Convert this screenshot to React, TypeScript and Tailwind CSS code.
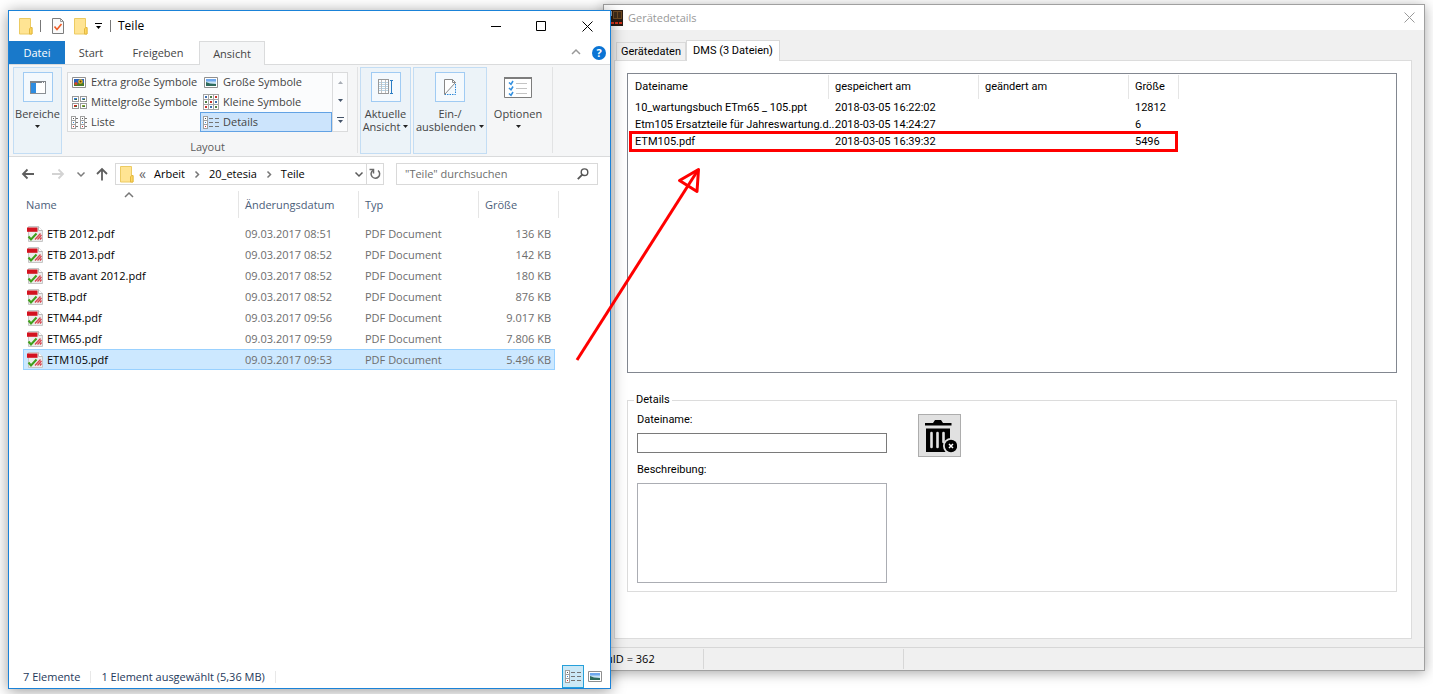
import React, { useState } from "react";
import clsx from "clsx";

const files = [
  { name: "ETB 2012.pdf", date: "09.03.2017 08:51", size: "136 KB" },
  { name: "ETB 2013.pdf", date: "09.03.2017 08:52", size: "142 KB" },
  { name: "ETB avant 2012.pdf", date: "09.03.2017 08:52", size: "180 KB" },
  { name: "ETB.pdf", date: "09.03.2017 08:52", size: "876 KB" },
  { name: "ETM44.pdf", date: "09.03.2017 09:56", size: "9.017 KB" },
  { name: "ETM65.pdf", date: "09.03.2017 09:59", size: "7.806 KB" },
  { name: "ETM105.pdf", date: "09.03.2017 09:53", size: "5.496 KB" },
];

const documents = [
  { name: "10_wartungsbuch ETm65 _ 105.ppt", saved: "2018-03-05 16:22:02", size: "12812" },
  { name: "Etm105 Ersatzteile für Jahreswartung.d...", saved: "2018-03-05 14:24:27", size: "6" },
  { name: "ETM105.pdf", saved: "2018-03-05 16:39:32", size: "5496" },
];

/* ---------- icons ---------- */

const FolderIcon = () => (
  <svg width="14" height="17" viewBox="0 0 14 17" className="shrink-0">
    <path d="M.5.5h11v9h1.500v6.500H.5z" fill="#ffe493" stroke="#eccb62" />
    <path d="M11.500 9.500h1.500v6.500h-2.500v-5z" fill="#ffd75e" stroke="#e3b840" />
  </svg>
);

const CheckPageIcon = () => (
  <svg width="12" height="16" viewBox="0 0 12 16">
    <path d="M.5.5h8l3 3v12H.5z" fill="#fafafa" stroke="#7d7d7d" />
    <path d="M8.500.5v3h3" fill="none" stroke="#9a9a9a" />
    <path d="M2.500 8.500l2.500 3 4.500-5.500" fill="none" stroke="#ee5a24" strokeWidth="1.600" />
  </svg>
);

const Caret = ({ className = "text-[#222]" }: { className?: string }) => (
  <svg width="5" height="3" viewBox="0 0 5 3" className={clsx("inline-block shrink-0", className)}>
    <path d="M0 0h5L2.500 3z" fill="currentColor" />
  </svg>
);

const Chevron = ({ dir, className }: { dir: "up" | "down" | "right"; className?: string }) => {
  const paths = {
    up: "M1 6l4-4 4 4",
    down: "M1.500 2.500L5 6l3.500-3.500",
    right: "M3.500 1.500L6.500 4.500l-3 3",
  };
  return (
    <svg width="10" height="9" viewBox="0 0 10 9" className={clsx("shrink-0", className)}>
      <path d={paths[dir]} fill="none" stroke="currentColor" strokeWidth="1.500" />
    </svg>
  );
};

const Arrow = ({ d, className }: { d: string; className: string }) => (
  <svg width="14" height="14" viewBox="0 0 14 14" className={className}>
    <path d={d} fill="none" stroke="currentColor" strokeWidth="1.800" />
  </svg>
);

const PdfIcon = () => (
  <svg width="16" height="16" viewBox="0 0 16 16" className="shrink-0">
    <path d="M1.500.5h10l4 4v11h-14z" fill="#ececec" stroke="#c6c6c6" />
    <path d="M11.500.5v4h4" fill="#fff" stroke="#b9b9b9" />
    <path d="M0 1.500h10.500v4.300H0z" fill="#d4121f" />
    <path d="M8 13.500l5.500-6M10.500 13.500l4-4.500M13 13.500l1.500-2" stroke="#d8434c" strokeWidth="1.300" />
    <path d="M1.500 10.500l2.500 3 5.500-6" fill="none" stroke="#3fa01c" strokeWidth="2" />
  </svg>
);

const PictureIcon = ({ flowers = false }: { flowers?: boolean }) => (
  <svg width="14" height="11" viewBox="0 0 14 11">
    <path d="M.5.5h13v10H.5z" fill="#fff" stroke="#8f8f8f" />
    <path d="M2 2h10v7H2z" fill={flowers ? "#2b62b8" : "#6fa8ee"} />
    {flowers ? (
      <>
        <path d="M2 6h10v3H2z" fill="#4b7a2a" />
        <circle cx="4" cy="6.500" r="1.500" fill="#d6402b" />
        <circle cx="8.500" cy="4.500" r="2.300" fill="#e8b21d" />
        <circle cx="8.500" cy="4.500" r="1" fill="#5a3a10" />
      </>
    ) : (
      <>
        <path d="M2 4.500h10V7H2z" fill="#c9e2f4" />
        <path d="M2 5l4 1.500 6 .5v2H2z" fill="#2f6b5c" />
      </>
    )}
  </svg>
);

const MediumIcon = () => (
  <svg width="15" height="13" viewBox="0 0 15 13" shapeRendering="crispEdges">
    {[
      [0, 0, "#3b7fd0"],
      [8, 0, "#5f92c8"],
      [0, 7, "#d0281c"],
      [8, 7, "#87a63a"],
    ].map(([x, y, fill]) => (
      <g key={`${x}-${y}`} transform={`translate(${x} ${y})`}>
        <path d="M.5.5h6v5h-6z" fill="#fff" stroke="#999" />
        <path d="M2 2h3v2H2z" fill={String(fill)} />
        <path d="M3 3h2v1H3z" fill="#3d6f3a" />
      </g>
    ))}
  </svg>
);

const SmallIcon = () => (
  <svg width="16" height="16" viewBox="0 0 16 16" shapeRendering="crispEdges">
    {[0, 5, 10].map((y, row) =>
      [0, 5, 10].map((x, col) => (
        <g key={`${x}-${y}`}>
          <path d={`M${x}.5 ${y}.5h5v5h-5z`} fill="#fff" stroke="#a5a5a5" />
          <path
            d={`M${x + 2} ${y + 2}h2v2h-2z`}
            fill={["#3b6fb0", "#4d7f45", "#c4302a"][(row + col) % 3]}
          />
        </g>
      ))
    )}
  </svg>
);

const ListIcon = () => (
  <svg width="16" height="13" viewBox="0 0 16 13" shapeRendering="crispEdges">
    {[0, 9].map((x) => (
      <g key={x} transform={`translate(${x} 0)`}>
        <path d="M.5.5h4v12h-4zM.5 4.500h4M.5 8.500h4" fill="#fff" stroke="#a0a0a0" />
        <path d="M2 2h1v1H2z" fill="#555" />
        <path d="M2 6h1v1H2z" fill="#3b8ad8" />
        <path d="M2 10h1v1H2z" fill="#d03030" />
        <path d="M5 2.500h2M5 6.500h2M5 10.500h2" stroke="#777" />
      </g>
    ))}
  </svg>
);

const DetailsIcon = () => (
  <svg width="16" height="13" viewBox="0 0 16 13" shapeRendering="crispEdges">
    <path d="M.5.5h4v12h-4zM.5 4.500h4M.5 8.500h4" fill="#fff" stroke="#a0a0a0" />
    <path d="M2 2h1v1H2z" fill="#555" />
    <path d="M2 6h1v1H2z" fill="#3b8ad8" />
    <path d="M2 10h1v1H2z" fill="#d03030" />
    <path d="M6 2.500h4M12 2.500h4M6 6.500h4M12 6.500h4M6 10.500h4M12 10.500h4" stroke="#747474" />
  </svg>
);

const PanesIcon = () => (
  <svg width="16" height="13" viewBox="0 0 16 13" shapeRendering="crispEdges">
    <path d="M.5.5h15v12H.5z" fill="#fff" stroke="#8a8f94" />
    <path d="M0 0h16v2H0z" fill="#80858a" />
    <path d="M1 2h5v10H1z" fill="#2d8ce0" />
    <path d="M12 1h1v1h-1zM14 1h1v1h-1z" fill="#fff" />
  </svg>
);

const CurrentViewIcon = () => (
  <svg width="16" height="16" viewBox="0 0 16 16" shapeRendering="crispEdges">
    <path d="M.5.5h10v14H.5z" fill="#fff" stroke="#999" />
    <path d="M1 3.500h9M1 5.500h9M1 7.500h9M1 9.500h9M1 11.500h9" stroke="#b5d3e6" />
    <path d="M3.500 1v13M7.500 1v13" stroke="#c0c0c0" />
    <path d="M13.500 1v14M12 1.500h3M12 14.500h3" stroke="#2b7dc4" />
  </svg>
);

const HideIcon = () => (
  <svg width="13" height="17" viewBox="0 0 13 17">
    <path d="M.5 15.500V.5h8l3 3z" fill="#fff" stroke="#888" />
    <path d="M8.500.5v3h3" fill="none" stroke="#888" />
    <path d="M11.500 5v10.500H1" fill="none" stroke="#2a86d8" strokeDasharray="1.500 1" />
  </svg>
);

const OptionsIcon = () => (
  <svg width="28" height="21" viewBox="0 0 28 21">
    <path d="M.5.5h27v20H.5z" fill="#fff" stroke="#7d7d7d" />
    <path d="M0 0h28v2H0z" fill="#7d7d7d" />
    <path d="M5 5.500l2 1.800L9 4M5 11l2 1.800L9 9.500M5 16.500l2 1.800L9 15" fill="none" stroke="#3390e0" strokeWidth="1.600" />
    <path d="M12 6.500h11M12 11.500h11M12 16.500h11" stroke="#c4c4c4" />
  </svg>
);

const TrashIcon = () => (
  <svg width="34" height="34" viewBox="0 0 34 34">
    <path d="M2 4h8l2-3h6l2 3h8.500v2.500H2z" fill="#000" />
    <path d="M3 9.500h24v23.500H3z" fill="#000" />
    <path d="M8.500 14v14M14.500 14v14M20.500 14v9" stroke="#e1e1e1" strokeWidth="2.600" strokeLinecap="round" />
    <circle cx="28" cy="27" r="8" fill="#e1e1e1" />
    <circle cx="28" cy="27" r="6.200" fill="#000" />
    <path d="M26 25l4 4M30 25l-4 4" stroke="#fff" strokeWidth="1.500" />
  </svg>
);

const AppIcon = () => (
  <svg width="16" height="16" viewBox="0 0 16 16" shapeRendering="crispEdges">
    <path d="M0 0h16v16H0z" fill="#2a1c14" />
    <path d="M6 1.500h8.500v7H6z" fill="#3d2a18" stroke="#6e4a22" />
    <path d="M10.500 2v6" stroke="#6e4a22" />
    <path d="M0 12h7v2H0zM8 12h3v2H8zM12 12h3v2h-3z" fill="#d8341c" />
    <path d="M1 1h4v5H1z" fill="#8fa0b4" />
  </svg>
);

/* ---------- explorer window ---------- */

const layouts = [
  { label: "Extra große Symbole", icon: <PictureIcon flowers /> },
  { label: "Große Symbole", icon: <PictureIcon /> },
  { label: "Mittelgroße Symbole", icon: <MediumIcon /> },
  { label: "Kleine Symbole", icon: <SmallIcon /> },
  { label: "Liste", icon: <ListIcon /> },
  { label: "Details", icon: <DetailsIcon /> },
];

const ExplorerTitle = () => (
  <header className="flex h-[30px] items-center pl-[10px]">
    <FolderIcon />
    <span className="ml-[7px] h-3 w-px bg-[#777]" />
    <button aria-label="Eigenschaften" className="ml-[11px]">
      <CheckPageIcon />
    </button>
    <button aria-label="Neuer Ordner" className="ml-[10px]">
      <FolderIcon />
    </button>
    <button aria-label="Schnellzugriff anpassen" className="ml-[7px] flex flex-col items-center gap-[2px]">
      <span className="h-px w-[7px] bg-black" />
      <Caret className="text-black" />
    </button>
    <span className="ml-2 h-3 w-px bg-[#777]" />
    <h1 className="ml-[7px] text-xs text-black">Teile</h1>
    <div className="ml-auto flex">
      <button aria-label="Minimieren" className="flex h-[29px] w-[46px] items-center justify-center">
        <svg width="11" height="11" viewBox="0 0 11 11">
          <path d="M0 5.500h10" stroke="#000" />
        </svg>
      </button>
      <button aria-label="Maximieren" className="flex h-[29px] w-[45px] items-center justify-center">
        <svg width="11" height="11" viewBox="0 0 11 11">
          <path d="M.5.5h9v9h-9z" fill="none" stroke="#000" />
        </svg>
      </button>
      <button aria-label="Schließen" className="flex h-[29px] w-[46px] items-center justify-center">
        <svg width="11" height="11" viewBox="0 0 11 11">
          <path d="M.5.5l10 10M10.500.5l-10 10" stroke="#000" />
        </svg>
      </button>
    </div>
  </header>
);

const ExplorerTabs = () => (
  <nav className="flex h-6 border-b border-[#dadbdc] text-[#444]">
    <button className="w-14 bg-[#1979ca] text-white">Datei</button>
    <button className="w-[52px]">Start</button>
    <button className="w-[82px]">Freigeben</button>
    <button className="-mb-px w-[66px] border border-b-0 border-[#dadbdc] bg-[#f5f6f7]">Ansicht</button>
    <div className="ml-auto flex items-center gap-[11px] pr-1">
      <button aria-label="Menüband minimieren">
        <Chevron dir="up" className="text-[#999]" />
      </button>
      <button
        aria-label="Hilfe"
        className="flex h-[14px] w-[14px] items-center justify-center rounded-full bg-[#0b74d4] font-bold leading-none text-white"
      >
        ?
      </button>
    </div>
  </nav>
);

interface RibbonButtonProps {
  icon: React.ReactNode;
  lines: string[];
  width: string;
  active?: boolean;
}

const RibbonButton = ({ icon, lines, width, active = true }: RibbonButtonProps) => (
  <button
    className={clsx(
      "flex h-[87px] shrink-0 flex-col items-center border pt-1 leading-[13px]",
      width,
      active ? "border-[#c3ddf4] bg-[#ecf3f8]" : "border-transparent"
    )}
  >
    <span
      className={clsx(
        "mb-[5px] flex h-[30px] w-[30px] items-center justify-center border",
        active ? "border-[#a0cbf3] bg-[#f4f9fd]" : "border-transparent"
      )}
    >
      {icon}
    </span>
    <span className="whitespace-nowrap">{lines[0]}</span>
    <span className="flex h-[13px] items-center gap-[3px] whitespace-nowrap">
      {lines[1]}
      <Caret />
    </span>
  </button>
);

const Ribbon = () => {
  const [layout, setLayout] = useState("Details");

  return (
    <section className="flex h-[92px] border-b border-[#dadbdc] bg-[#f5f6f7] pl-1 pt-[2px] text-[#444]">
      <RibbonButton icon={<PanesIcon />} lines={["Bereiche"]} width="w-[49px]" />
      <div className="ml-[5px] mt-[5px] w-[281px] shrink-0">
        <div className="flex h-[60px] border border-[#dadbdc] bg-[#fbfcfd]">
          <div className="-my-px grid flex-1 grid-cols-2 grid-rows-3">
            {layouts.map((item) => (
              <button
                key={item.label}
                onClick={() => setLayout(item.label)}
                className={clsx(
                  "flex items-center gap-1 whitespace-nowrap border pl-[2px]",
                  layout === item.label ? "border-[#62a2e4] bg-[#cce4fc]" : "border-transparent"
                )}
              >
                <span className="flex w-4 justify-center">{item.icon}</span>
                {item.label}
              </button>
            ))}
          </div>
          <div className="flex w-[15px] flex-col items-center justify-around border-l border-[#dadbdc]">
            <Caret className="rotate-180 text-[#a8adb5]" />
            <Caret className="text-[#44546a]" />
            <span className="flex flex-col items-center gap-[2px]">
              <span className="h-px w-[7px] bg-[#44546a]" />
              <Caret className="text-[#44546a]" />
            </span>
          </div>
        </div>
        <p className="pt-[7px] text-center leading-4 text-[#5c5c5c]">Layout</p>
      </div>
      <span className="ml-[9px] h-[86px] w-px shrink-0 bg-[#e2e3e4]" />
      <div className="ml-[2px] flex gap-[2px]">
        <RibbonButton icon={<CurrentViewIcon />} lines={["Aktuelle", "Ansicht"]} width="w-[51px]" />
        <RibbonButton icon={<HideIcon />} lines={["Ein-/", "ausblenden"]} width="w-[74px]" />
        <RibbonButton icon={<OptionsIcon />} lines={["Optionen"]} width="w-[58px]" active={false} />
      </div>
      <span className="ml-[5px] h-[86px] w-px shrink-0 bg-[#e2e3e4]" />
    </section>
  );
};

const AddressBar = () => (
  <div className="flex h-[34px] items-center pl-3 pr-3">
    <button aria-label="Zurück">
      <Arrow d="M13 7H2M6.500 2.500L2 7l4.500 4.500" className="text-[#5e5e5e]" />
    </button>
    <button aria-label="Vorwärts" className="ml-4">
      <Arrow d="M1 7h11M7.500 2.500L12 7l-4.500 4.500" className="text-[#d3d3d3]" />
    </button>
    <button aria-label="Zuletzt besucht" className="ml-[11px]">
      <Chevron dir="down" className="text-[#7c7c7c]" />
    </button>
    <button aria-label="Nach oben" className="ml-[9px]">
      <Arrow d="M7 13.500V2M2 7l5-5 5 5" className="text-[#5e5e5e]" />
    </button>
    <div className="ml-[6px] flex h-[22px] min-w-0 flex-1 items-center border border-[#d9d9d9] pl-1 text-black">
      <FolderIcon />
      <span className="ml-[5px] text-sm leading-none text-[#666]">«</span>
      <a href="#arbeit" className="ml-2">Arbeit</a>
      <Chevron dir="right" className="ml-[7px] text-[#777]" />
      <a href="#etesia" className="ml-[7px]">20_etesia</a>
      <Chevron dir="right" className="ml-[7px] text-[#777]" />
      <a href="#teile" className="ml-[7px]">Teile</a>
      <button aria-label="Vorherige Orte" className="ml-auto mr-[2px]">
        <Chevron dir="down" className="text-[#5a5a5a]" />
      </button>
      <button aria-label="Aktualisieren" className="flex h-full w-[17px] items-center justify-center border-l border-[#d9d9d9]">
        <svg width="12" height="12" viewBox="0 0 12 12">
          <path d="M9 2.500a4.300 4.300 0 1 1 -5 -.2" fill="none" stroke="#6a6a6a" strokeWidth="1.500" />
          <path d="M4.500 5.500V1.500h-4" fill="none" stroke="#6a6a6a" strokeWidth="1.500" />
        </svg>
      </button>
    </div>
    <label className="ml-3 flex h-[22px] w-[202px] items-center border border-[#d9d9d9] pl-2 pr-2">
      <input
        type="search"
        aria-label="Teile durchsuchen"
        placeholder={'"Teile" durchsuchen'}
        className="min-w-0 flex-1 outline-none placeholder:text-[#6d6d6d]"
      />
      <svg width="12" height="12" viewBox="0 0 12 12">
        <circle cx="7.500" cy="4.200" r="3.300" fill="none" stroke="#555" strokeWidth="1.400" />
        <path d="M5 6.800L.8 11.200" stroke="#555" strokeWidth="1.800" />
      </svg>
    </label>
  </div>
);

const FileTable = () => {
  const [selected, setSelected] = useState("ETM105.pdf");

  return (
    <table className="ml-[14px] w-[536px] table-fixed border-separate border-spacing-0 text-left text-[#6d6d6d]">
      <colgroup>
        <col className="w-[216px]" />
        <col className="w-[120px]" />
        <col className="w-[120px]" />
        <col className="w-[76px]" />
        <col className="w-1" />
      </colgroup>
      <thead className="text-[#4c607a]">
        <tr className="h-[27px]">
          <th className="relative border-r border-[#e5e5e5] pl-[3px] font-normal">
            Name
            <Chevron dir="up" className="absolute left-[101px] top-0 text-[#777]" />
          </th>
          <th className="border-r border-[#e5e5e5] pl-[6px] font-normal">Änderungsdatum</th>
          <th className="border-r border-[#e5e5e5] pl-[6px] font-normal">Typ</th>
          <th colSpan={2} className="border-r border-[#e5e5e5] pl-[6px] font-normal">Größe</th>
        </tr>
      </thead>
      <tbody>
        <tr className="h-[5px]">
          <td colSpan={5} />
        </tr>
        {files.map((file) => {
          const cell = clsx(
            "border-y",
            selected === file.name ? "border-[#99d1ff] bg-[#cce8ff]" : "border-transparent"
          );
          return (
            <tr key={file.name} className="h-[21px]" onClick={() => setSelected(file.name)}>
              <td className={clsx(cell, "border-l pl-[3px] text-black")}>
                <span className="flex items-center gap-1">
                  <PdfIcon />
                  {file.name}
                </span>
              </td>
              <td className={clsx(cell, "pl-[6px]")}>{file.date}</td>
              <td className={clsx(cell, "pl-[6px]")}>PDF Document</td>
              <td className={clsx(cell, "border-r pr-[3px] text-right")}>{file.size}</td>
            </tr>
          );
        })}
      </tbody>
    </table>
  );
};

const ExplorerWindow = () => (
  <section className="absolute bottom-[5px] left-2 top-[10px] z-10 flex w-[603px] flex-col border border-[#1a82d8] bg-white font-['Open_Sans',sans-serif] text-[11px] leading-4 shadow-[0_2px_14px_rgba(0,0,0,0.4)]">
    <ExplorerTitle />
    <ExplorerTabs />
    <Ribbon />
    <AddressBar />
    <FileTable />
    <footer className="mt-auto flex h-[23px] items-center pl-[14px] pr-2 text-[#1e395b]">
      <span>7 Elemente</span>
      <span className="ml-[10px] h-3 w-px bg-[#e8e8e8]" />
      <span className="ml-[10px]">1 Element ausgewählt (5,36 MB)</span>
      <span className="ml-[10px] h-3 w-px bg-[#e8e8e8]" />
      <button
        aria-label="Detailansicht"
        className="ml-auto flex h-[23px] w-[22px] items-center justify-center border border-[#26a0da] bg-[#cbe8f6]"
      >
        <DetailsIcon />
      </button>
      <button aria-label="Große Miniaturansichten" className="ml-1">
        <PictureIcon />
      </button>
    </footer>
  </section>
);

/* ---------- device window ---------- */

const DocumentTable = () => (
  <div className="h-[300px] border border-[#828790] pt-px">
    <table className="w-[551px] table-fixed border-separate border-spacing-0 text-left text-black">
      <colgroup>
        <col className="w-[201px]" />
        <col className="w-[150px]" />
        <col className="w-[150px]" />
        <col className="w-[50px]" />
      </colgroup>
      <thead>
        <tr className="h-6">
          <th className="border-r border-[#e5e5e5] pl-[7px] font-normal">Dateiname</th>
          <th className="border-r border-[#e5e5e5] pl-[6px] font-normal">gespeichert am</th>
          <th className="border-r border-[#e5e5e5] pl-[6px] font-normal">geändert am</th>
          <th className="border-r border-[#e5e5e5] pl-[6px] font-normal">Größe</th>
        </tr>
      </thead>
      <tbody className="whitespace-nowrap">
        {documents.map((doc) => (
          <tr key={doc.name} className="h-[17px]">
            <td className="pl-[7px]">{doc.name}</td>
            <td className="pl-[6px]">{doc.saved}</td>
            <td />
            <td className="pl-[6px]">{doc.size}</td>
          </tr>
        ))}
      </tbody>
    </table>
  </div>
);

const DetailsForm = () => (
  <fieldset className="mt-5 flex h-[199px] items-start border border-[#dcdcdc] pl-[9px]">
    <legend className="-ml-[3px] px-[2px] leading-[14px]">Details</legend>
    <div className="flex w-[250px] flex-col">
      <label htmlFor="dateiname" className="mt-[6px] leading-[14px]">
        Dateiname:
      </label>
      <input id="dateiname" className="mt-[6px] h-5 border border-[#7a7a7a] bg-white px-1 outline-none" />
      <label htmlFor="beschreibung" className="mt-[10px] leading-[14px]">
        Beschreibung:
      </label>
      <textarea
        id="beschreibung"
        className="mt-[6px] h-[100px] resize-none border border-[#abadb3] bg-white px-1 outline-none"
      />
    </div>
    <button
      aria-label="Löschen"
      className="ml-[31px] mt-[7px] flex h-[43px] w-[43px] items-center justify-center border border-[#adadad] bg-[#e1e1e1]"
    >
      <TrashIcon />
    </button>
  </fieldset>
);

const DeviceWindow = () => (
  <section className="absolute bottom-[23px] left-[603px] right-2 top-1 flex flex-col border border-[#a0a0a0] bg-[#f0f0f0] font-['Roboto',sans-serif] text-[11px] leading-[14px] text-black shadow-[0_2px_12px_rgba(0,0,0,0.35)]">
    <header className="flex h-[25px] shrink-0 items-center bg-white pl-[3px] font-['Open_Sans',sans-serif] text-[#999]">
      <AppIcon />
      <h2 className="ml-[5px]">Gerätedetails</h2>
      <button aria-label="Schließen" className="ml-auto mr-[9px]">
        <svg width="11" height="11" viewBox="0 0 11 11">
          <path d="M.5.5l10 10M10.500.5l-10 10" stroke="#999" />
        </svg>
      </button>
    </header>
    <div className="flex items-end pl-3 pt-[10px]">
      <button className="h-[18px] w-[70px] border border-b-0 border-[#d9d9d9] bg-[#f0f0f0]">Gerätedaten</button>
      <button className="z-10 -mb-px h-[21px] w-[94px] border border-b-0 border-[#d9d9d9] bg-white">
        DMS (3 Dateien)
      </button>
    </div>
    <main className="ml-[10px] mr-3 flex-1 border border-[#dcdcdc] bg-white pl-3 pr-[14px] pt-3">
      <DocumentTable />
      <DetailsForm />
    </main>
    <footer className="mt-2 flex h-[23px] shrink-0 items-center border-t border-[#d7d7d7] font-['Open_Sans',sans-serif]">
      <span className="flex h-5 w-[100px] items-center border-r border-[#d7d7d7] pl-[2px]">uID = 362</span>
      <span className="h-5 w-[200px] border-r border-[#d7d7d7]" />
    </footer>
  </section>
);

const Annotation = () => (
  <svg className="pointer-events-none absolute inset-0 z-20 h-full w-full" fill="none" stroke="#f00" strokeWidth="3">
    <path d="M630.500 132.500h546v18h-546z" />
    <path d="M577 360L698 170" />
    <path d="M698.500 169.500l-19 11 17.500 11z" strokeLinejoin="round" />
  </svg>
);

const App = () => {
  return (
    <div className="relative h-screen min-h-[694px] w-full overflow-hidden bg-white">
      <DeviceWindow />
      <ExplorerWindow />
      <Annotation />
    </div>
  );
};

export default App;
